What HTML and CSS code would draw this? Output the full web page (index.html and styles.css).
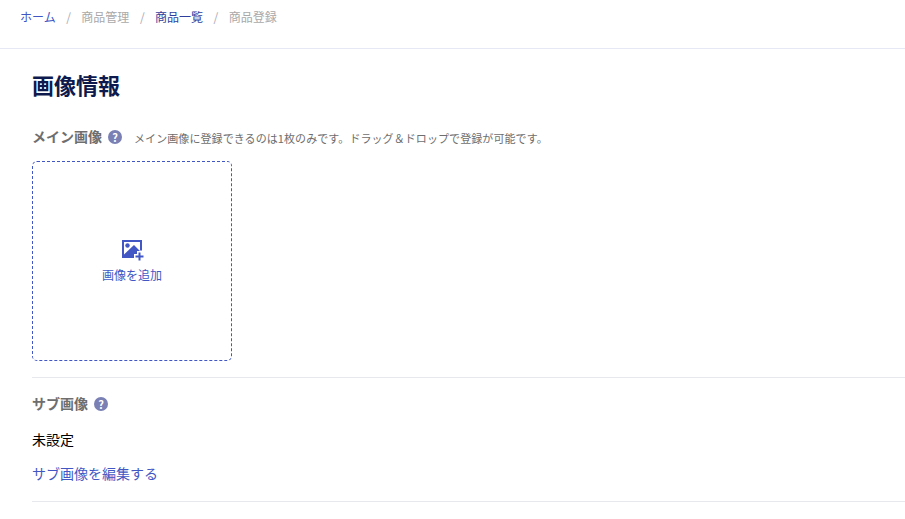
FILE: index.html
```html
<html>
  <head>
    <title>商品登録</title>
    <link rel="stylesheet" href="styles.css">
  </head>
  <body>
    <ul class="breadcrumb">
      <li><a href="#">ホーム</a></li>
      <li class="sep">/</li>
      <li class="plain">商品管理</li>
      <li class="sep">/</li>
      <li><a href="#" class="dark">商品一覧</a></li>
      <li class="sep">/</li>
      <li class="plain">商品登録</li>
    </ul>

    <div class="content">
      <h1>画像情報</h1>

      <div class="section main-section">
        <div class="label-row">
          <span class="label">メイン画像</span>
          <span class="help">?</span>
          <span class="hint">メイン画像に登録できるのは1枚のみです。ドラッグ＆ドロップで登録が可能です。</span>
        </div>
        <div class="dropzone">
          <svg class="add-icon" width="22" height="21" viewBox="0 0 22 21">
            <path fill="#4257c4" d="M0 0h20v10.5h-2V2H2v12.5L12 5l6 6h-3v3h-3v4H0z"/>
            <circle fill="#4257c4" cx="5.5" cy="5.5" r="2.2"/>
            <path fill="#4257c4" d="M16.5 12.5h2v3h3v2h-3v3h-2v-3h-3v-2h3z"/>
          </svg>
          <span class="add-text">画像を追加</span>
        </div>
      </div>

      <div class="section sub-section">
        <div class="label-row">
          <span class="label">サブ画像</span>
          <span class="help">?</span>
        </div>
        <p class="value">未設定</p>
        <a href="#" class="edit">サブ画像を編集する</a>
      </div>
    </div>
  </body>
</html>
```

FILE: styles.css
```css
/* Page */
body {
  margin: 0;
  background: #fff;
  color: #000;
  font-family: "Noto Sans CJK JP", "Noto Sans", sans-serif;
  overflow: hidden;
}
a {
  color: #4257c4;
  text-decoration: none;
}

/* Breadcrumb */
.breadcrumb {
  display: flex;
  gap: 10.5px;
  height: 49px;
  margin: 0;
  padding: 7px 20px 0;
  box-sizing: border-box;
  border-bottom: 1px solid #e6e9f5;
  list-style: none;
  font-size: 12px;
  line-height: 20px;
}
.breadcrumb .plain {
  color: #a9a9a9;
}
.breadcrumb .sep {
  color: #a9a9b5;
}
.breadcrumb .dark {
  color: #2f3f9e;
}

/* Content */
.content {
  padding: 0 0 0 32px;
}
h1 {
  margin: 0;
  padding-top: 20px;
  font-size: 22px;
  line-height: 30px;
  font-weight: 700;
  color: #0e1a4d;
}
.section {
  border-bottom: 1px solid #e6e8ee;
}
.main-section {
  padding: 27px 0 16px;
}
.sub-section {
  padding: 15px 0 18px;
}
.label-row {
  display: flex;
  align-items: center;
  height: 20px;
}
.label {
  font-size: 14px;
  font-weight: 700;
  color: #6e6e6e;
}
.help {
  width: 14px;
  height: 14px;
  margin: 2px 0 0 6px;
  border-radius: 50%;
  background: #7a80b4;
  color: #fff;
  font-size: 11px;
  font-weight: 700;
  line-height: 14px;
  text-align: center;
}
.hint {
  margin: 3px 0 0 12px;
  font-size: 11px;
  letter-spacing: 0.08px;
  color: #6e6e6e;
}

/* Drop area */
.dropzone {
  display: flex;
  flex-direction: column;
  align-items: center;
  justify-content: center;
  width: 200px;
  height: 200px;
  margin-top: 15px;
  box-sizing: border-box;
  border: 1px dashed #4257c4;
  border-radius: 5px;
}
.add-icon {
  margin: 2px 0 0 2px;
}
.add-text {
  margin-top: 5px;
  font-size: 12px;
  line-height: 18px;
  color: #4257c4;
}

/* Sub image */
.value {
  margin: 16px 0 0;
  font-size: 14px;
  line-height: 20px;
}
.edit {
  display: block;
  margin-top: 14px;
  font-size: 14px;
  line-height: 20px;
}
```
